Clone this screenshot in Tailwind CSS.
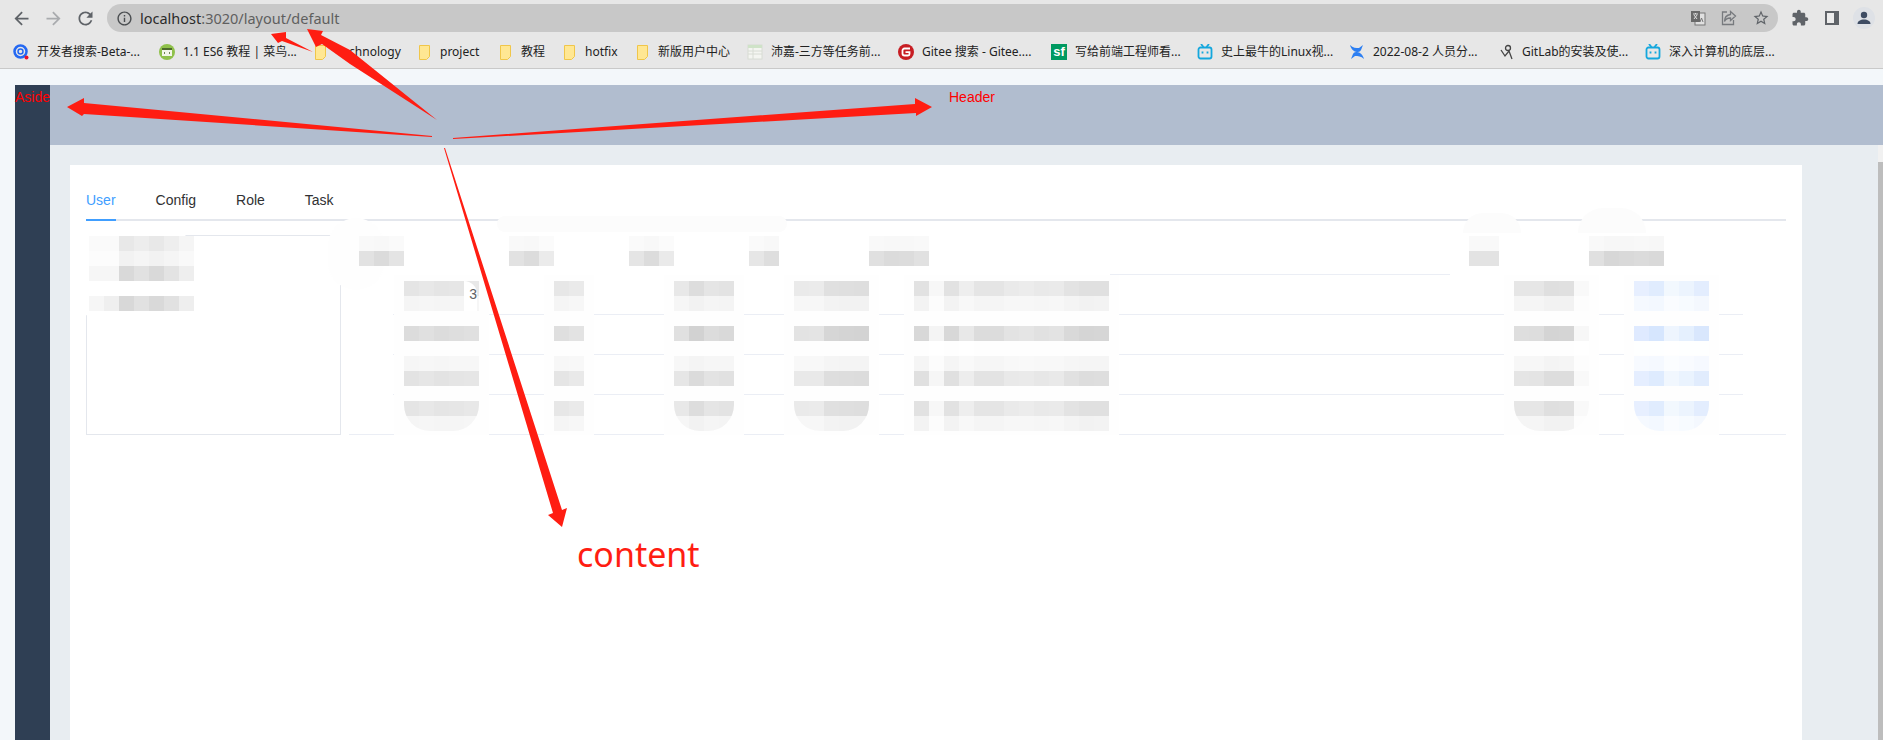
<!DOCTYPE html>
<html lang="en">
<head>
  <meta charset="UTF-8" />
  <title>localhost:3020/layout/default</title>
  <script src="https://cdn.jsdelivr.net/npm/@tailwindcss/browser@4"></script>
</head>
<body class="relative w-[1883px] h-[740px] overflow-hidden bg-[#f3f7fa] font-['Liberation_Sans',sans-serif]">

  <!-- Browser chrome -->
  <div class="h-[69px] bg-[#e7e7e7] border-b border-[#c9c9c9] font-['Noto_Sans','Noto_Sans_CJK_SC',sans-serif]">
    <div class="h-[36px] flex items-center">
      <div class="w-[107px] flex items-center pl-[11px] gap-[11px]">
        <svg class="w-[21px] h-[21px] fill-[#5f6368]" viewBox="0 0 24 24"><path d="M20 11H7.83l5.59-5.59L12 4l-8 8 8 8 1.41-1.41L7.83 13H20v-2z"/></svg>
        <svg class="w-[21px] h-[21px] fill-[#a9abae]" viewBox="0 0 24 24"><path d="M12 4l-1.41 1.41L16.17 11H4v2h12.17l-5.58 5.59L12 20l8-8z"/></svg>
        <svg class="w-[21px] h-[21px] fill-[#5f6368]" viewBox="0 0 24 24"><path d="M17.65 6.35C16.2 4.9 14.21 4 12 4c-4.42 0-7.99 3.58-7.99 8s3.57 8 7.99 8c3.73 0 6.84-2.55 7.73-6h-2.08c-.82 2.33-3.04 4-5.65 4-3.31 0-6-2.69-6-6s2.69-6 6-6c1.66 0 3.14.69 4.22 1.78L13 11h7V4l-2.35 2.35z"/></svg>
      </div>
      <div class="w-[1671px] h-[28px] rounded-full bg-[#c8c8c8] flex items-center pl-[9px] pr-[8px]">
        <svg class="w-[17px] h-[17px] fill-[#4a4d50]" viewBox="0 0 24 24"><path d="M11 7h2v2h-2zm0 4h2v6h-2zm1-9C6.48 2 2 6.48 2 12s4.48 10 10 10 10-4.48 10-10S17.52 2 12 2zm0 18c-4.41 0-8-3.59-8-8s3.59-8 8-8 8 3.59 8 8-3.59 8-8 8z"/></svg>
        <div class="ml-[7px] text-[14.5px] text-[#5f5f5f] leading-none"><span class="text-[#2b2b2b]">localhost</span>:3020/layout/default</div>
        <div class="ml-auto flex items-center gap-[14px]">
          <svg class="w-[16px] h-[16px]" viewBox="0 0 16 16"><rect x="5" y="3" width="10" height="12" fill="#e0e0e0" stroke="#777" /><rect x="1" y="1" width="9" height="11" fill="#6a6a6a" /><path d="M3 4h5M5.5 3v1M4 9l3-4M4 5l3 4" stroke="#ddd" fill="none"/><path d="M10 12l1.5-4 1.5 4" stroke="#777" fill="none"/></svg>
          <svg class="w-[18px] h-[18px] fill-none stroke-[#777a7e]" viewBox="0 0 18 18" stroke-width="1.3"><path d="M7 3H2.500v12.500h11V11"/><path d="M10.500 2.500l5 4.500-5 4.500V9c-3 0-5 1-6 3.500 0-4 2-6.500 6-7z"/></svg>
          <svg class="w-[18px] h-[18px] fill-[#5f6368]" viewBox="0 0 24 24"><path d="M22 9.24l-7.19-.62L12 2 9.19 8.63 2 9.24l5.46 4.73L5.82 21 12 17.27 18.18 21l-1.63-7.03L22 9.24zM12 15.4l-3.76 2.27 1-4.28-3.32-2.88 4.38-.38L12 6.1l1.71 4.04 4.38.38-3.32 2.88 1 4.28L12 15.4z"/></svg>
        </div>
      </div>
      <div class="flex items-center pl-[13px]">
        <svg class="w-[18px] h-[18px] fill-[#5f6368]" viewBox="0 0 24 24"><path d="M20.500 11H19V7c0-1.100-.9-2-2-2h-4V3.500C13 2.120 11.880 1 10.500 1S8 2.120 8 3.500V5H4c-1.100 0-1.990.9-1.990 2v3.800H3.500c1.490 0 2.700 1.210 2.700 2.700s-1.210 2.700-2.700 2.700H2V20c0 1.100.9 2 2 2h3.800v-1.500c0-1.490 1.210-2.700 2.700-2.700 1.490 0 2.700 1.210 2.700 2.700V22H17c1.100 0 2-.9 2-2v-4h1.500c1.380 0 2.500-1.120 2.500-2.500S21.880 11 20.500 11z"/></svg>
        <div class="ml-[16px] w-[14px] h-[14px] border-2 border-[#5f6368] bg-[#5f6368] flex"><div class="w-[7px] bg-[#ececec]"></div></div>
        <div class="ml-[14px] w-[22px] h-[22px] rounded-full bg-[#dee1e6] flex items-center justify-center">
          <svg class="w-[16px] h-[16px] fill-[#3e4c63]" viewBox="0 0 16 16"><circle cx="8" cy="5" r="3.200"/><path d="M1.500 14c0-3 3-4.500 6.500-4.500s6.500 1.500 6.500 4.500z"/></svg>
        </div>
      </div>
    </div>
    <div class="h-[32px] flex items-center pl-[13px] text-[12px] text-[#222]">
      <div class="w-[146px] flex items-center gap-[8px]">
        <svg class="w-[16px] h-[16px]" viewBox="0 0 16 16"><circle cx="7.500" cy="7.500" r="6" fill="none" stroke="#2468f2" stroke-width="2.500"/><circle cx="7.500" cy="7.500" r="2.500" fill="none" stroke="#2468f2" stroke-width="1.500"/><circle cx="13.500" cy="13.500" r="2" fill="#e8112d"/></svg>
        <span>开发者搜索-Beta-...</span>
      </div>
      <div class="w-[156px] flex items-center gap-[8px]">
        <svg class="w-[16px] h-[16px]" viewBox="0 0 16 16"><circle cx="8" cy="8" r="8" fill="#8fc14a"/><rect x="3" y="4" width="10" height="8" fill="#f2f6e8"/><rect x="3" y="4" width="10" height="2" fill="#4d6a2c"/><path d="M6 8l-1 1 1 1M10 8l1 1-1 1" stroke="#4d6a2c" fill="none" stroke-width=".8"/></svg>
        <span>1.1 ES6 教程 | 菜鸟...</span>
      </div>
      <div class="w-[104px] flex items-center gap-[12px]">
        <svg class="w-[11px] h-[15px] fill-[#ffe793] stroke-[#f0c64a]" viewBox="0 0 11 15"><path d="M.5.500h10v11l-3 3h-7z"/></svg>
        <span>technology</span>
      </div>
      <div class="w-[81px] flex items-center gap-[10px]">
        <svg class="w-[11px] h-[15px] fill-[#ffe793] stroke-[#f0c64a]" viewBox="0 0 11 15"><path d="M.5.500h10v11l-3 3h-7z"/></svg>
        <span>project</span>
      </div>
      <div class="w-[64px] flex items-center gap-[10px]">
        <svg class="w-[11px] h-[15px] fill-[#ffe793] stroke-[#f0c64a]" viewBox="0 0 11 15"><path d="M.5.500h10v11l-3 3h-7z"/></svg>
        <span>教程</span>
      </div>
      <div class="w-[73px] flex items-center gap-[10px]">
        <svg class="w-[11px] h-[15px] fill-[#ffe793] stroke-[#f0c64a]" viewBox="0 0 11 15"><path d="M.5.500h10v11l-3 3h-7z"/></svg>
        <span>hotfix</span>
      </div>
      <div class="w-[110px] flex items-center gap-[10px]">
        <svg class="w-[11px] h-[15px] fill-[#ffe793] stroke-[#f0c64a]" viewBox="0 0 11 15"><path d="M.5.500h10v11l-3 3h-7z"/></svg>
        <span>新版用户中心</span>
      </div>
      <div class="w-[151px] flex items-center gap-[8px]">
        <svg class="w-[16px] h-[16px]" viewBox="0 0 16 16"><rect x="1" y="1" width="14" height="14" fill="#f4f5f1" stroke="#d8dcd4"/><rect x="1" y="1" width="14" height="3" fill="#cfe3c8"/><path d="M1 7h14M1 10h14M6 4v11" stroke="#d8dcd4"/></svg>
        <span>沛嘉-三方等任务前...</span>
      </div>
      <div class="w-[153px] flex items-center gap-[8px]">
        <svg class="w-[16px] h-[16px]" viewBox="0 0 16 16"><circle cx="8" cy="8" r="8" fill="#c71d23"/><path d="M12 4.500H6.500a2 2 0 0 0-2 2v3a2 2 0 0 0 2 2H10a1.500 1.500 0 0 0 1.500-1.500V8.200H7.500" fill="none" stroke="#fff" stroke-width="1.800"/></svg>
        <span>Gitee 搜索 - Gitee....</span>
      </div>
      <div class="w-[146px] flex items-center gap-[8px]">
        <div class="w-[16px] h-[16px] bg-[#009a61] text-white text-[13px] font-bold leading-[16px] text-center font-['Liberation_Sans',sans-serif]">sf</div>
        <span>写给前端工程师看...</span>
      </div>
      <div class="w-[152px] flex items-center gap-[8px]">
        <svg class="w-[16px] h-[16px] fill-none stroke-[#14a7dd]" viewBox="0 0 16 16" stroke-width="1.800"><rect x="1.500" y="3.500" width="13" height="11" rx="2"/><path d="M4 0l2.500 3M12 0L9.500 3M5.500 7.500v2M10.500 7.500v2"/></svg>
        <span>史上最牛的Linux视...</span>
      </div>
      <div class="w-[148px] flex items-center gap-[8px]">
        <svg class="w-[16px] h-[16px] fill-[#2d7ff2]" viewBox="0 0 16 16"><path d="M1 1c3 3 6 3 9 3l4-3-2 5c-1 2-3 2-4 2-3 0-6-3-7-7zM15 15c-3-3-6-3-9-3l-4 3 2-5c1-2 3-2 4-2 3 0 6 3 7 7z"/></svg>
        <span>2022-08-2 人员分...</span>
      </div>
      <div class="w-[148px] flex items-center gap-[9px] pl-[3px]">
        <svg class="w-[13px] h-[16px] fill-none stroke-[#444]" viewBox="0 0 13 16" stroke-width="1.300"><circle cx="8" cy="4" r="2.500"/><path d="M1 6l4 6 4-5 3 8"/></svg>
        <span>GitLab的安装及使...</span>
      </div>
      <div class="flex items-center gap-[8px]">
        <svg class="w-[16px] h-[16px] fill-none stroke-[#14a7dd]" viewBox="0 0 16 16" stroke-width="1.800"><rect x="1.500" y="3.500" width="13" height="11" rx="2"/><path d="M4 0l2.500 3M12 0L9.500 3M5.500 7.500v2M10.500 7.500v2"/></svg>
        <span>深入计算机的底层...</span>
      </div>
    </div>
  </div>

  <!-- Page -->
  <div class="h-[671px] pl-[15px] pt-[16px] flex">
    <div class="w-[35px] h-full bg-[#2f3f54] text-[14px] text-[#ff0000] leading-[24px] whitespace-nowrap">Aside</div>
    <div class="flex-1 min-w-0 flex flex-col">
      <div class="h-[60px] bg-[#b1bdcf] pl-[899px] text-[14px] text-[#ff0000] leading-[24px]">Header</div>
      <div class="flex-1 bg-[#e8edf1] pt-[20px] pl-[20px] pr-[81px]">
        <div class="h-full bg-white px-[16px] pt-[16px]">
          <!-- Tabs -->
          <div class="h-[40px] flex gap-[40px] border-b-2 border-[#e4e7ed] text-[14px] text-[#303133] leading-[38px]">
            <div class="h-[40px] border-b-2 border-[#409eff] text-[#409eff]">User</div>
            <div>Config</div>
            <div>Role</div>
            <div>Task</div>
          </div>
          <div class="mt-[14px] flex gap-[8px]">
            <!-- Left tree -->
            <div class="w-[255px] h-[200px] border border-[#e4e7ed] pl-[2px]">
              <div id="tree" class="relative z-20"></div>
            </div>
            <!-- Table -->
            <div id="table" class="flex-1 min-w-0"></div>
          </div>
        </div>
      </div>
    </div>
  </div>

  <!-- Smudges left by the blur over the card -->
  <div class="absolute z-10 left-[70px] top-[225px] w-[126px] h-[96px] bg-white rounded-[36px]"></div>
  <div class="absolute z-10 left-[328px] top-[218px] w-[56px] h-[72px] bg-[#fefefe] rounded-[28px]"></div>
  <div class="absolute z-10 left-[497px] top-[216px] w-[290px] h-[16px] bg-[#fcfcfc] rounded-full"></div>
  <div class="absolute z-10 left-[1463px] top-[213px] w-[58px] h-[20px] bg-[#fcfcfc] rounded-t-full"></div>
  <div class="absolute z-10 left-[1578px] top-[208px] w-[68px] h-[25px] bg-[#fcfcfc] rounded-t-full"></div>

  <!-- Half hidden value in the first row -->
  <div class="absolute z-20 left-[464px] top-[281px] w-[13px] h-[30px] bg-white rounded-tr-[14px] text-right text-[14px] leading-[26px] text-[#606266]">3</div>

  <!-- Scrollbar -->
  <div class="absolute right-0 top-[145px] w-[5px] h-[17px] bg-[#f1f1f1]"></div>
  <div class="absolute right-0 top-[162px] w-[5px] h-[578px] bg-[#bdbdbd]"></div>

  <!-- Annotations -->
  <svg class="absolute z-30 left-0 top-0 w-[1883px] h-[740px] fill-[#ff1d12]" viewBox="0 0 1883 740">
    <polygon points="432,136 84,103 84,98 67,107 82,116 84,114 432,137" />
    <polygon points="453,138 915,104 915,98 932,107 916,116 916,113 453,139" />
    <polygon points="313,52 286,38 286,32 271,34 278,43 282,41" />
    <polygon points="437,120 350,50 321,35 323,31 307,29 316,47 322,44 350,64" />
    <polygon points="445,148 562,510 567,508 562,527 548,515 553,513 444,148" />
  </svg>
  <div class="absolute z-30 left-[577px] top-[530px] text-[34px] leading-[48px] text-[#ff1d12] font-['Noto_Sans',sans-serif]">content</div>

  <script>
    // Mosaic blocks: each cell is 255 minus delta * level, so a column keeps its shade across lines
    function tint(delta, level) {
      const d = Array.isArray(delta) ? delta : [delta, delta, delta];
      return 'rgb(' + d.map(v => Math.round(255 - v * level)).join(',') + ')';
    }

    function mosaic(deltas, levels) {
      return levels.map(level => {
        const cells = deltas.map(d =>
          `<div class="w-[15px] h-[15px]" style="background:${tint(d, level)}"></div>`).join('');
        return `<div class="flex">${cells}</div>`;
      }).join('');
    }

    const blue = [[32, 21, 0], [41, 25, 1], [17, 10, 1], [26, 15, 1], [38, 24, 2]];

    const columns = [
      { width: 'w-[150px]', head: [29, 36, 27], body: [35, 31, 35, 33, 31], round: true },
      { width: 'w-[120px]', head: [29, 35, 20], body: [32, 28], round: false },
      { width: 'w-[120px]', head: [26, 35, 21], body: [31, 45, 35, 38], round: true },
      { width: 'w-[120px]', head: [25, 33], body: [28, 27, 41, 43, 44], round: true },
      { width: 'w-[600px]', head: [31, 36, 35, 30], body: [39, 11, 39, 23, 35, 35, 28, 26, 30, 28, 38, 42, 41], round: false },
      { width: 'w-[120px]', head: [28, 28], body: [33, 34, 43, 42, 8], round: true },
      { width: 'flex-1', head: [31, 40, 38, 36, 38], body: blue, round: true },
    ];

    const rows = [
      { pad: 'pt-[6px]', levels: [0.75, 0.3], line: 'left-[44px] right-[43px]' },
      { pad: 'pt-[11px]', levels: [1, 0.02], line: 'left-[44px] right-[43px]' },
      { pad: 'pt-[1px]', levels: [0.25, 0.8], line: 'left-[44px] right-[43px]' },
      { pad: 'pt-[6px]', levels: [0.75, 0.3], line: 'left-0 right-0' },
    ];

    const headCells = columns.map(c =>
      `<div class="${c.width} pl-[10px] pt-[1px]"><div class="relative z-20">${mosaic(c.head, [0.2, 1])}</div></div>`).join('');

    const bodyRows = rows.map((r, i) => {
      const cells = columns.map(c => {
        const edge = i === 3 && c.round ? 'rounded-b-[26px] overflow-hidden' : '';
        return `<div class="${c.width} pl-[45px] relative">
          <div class="w-fit h-[40px] bg-[#fefefe] px-[10px] ${r.pad}">
            <div class="${edge}">${mosaic(c.body, r.levels)}</div>
          </div>
        </div>`;
      }).join('');
      return `<div class="h-[40px] relative flex">
        <div class="absolute bottom-0 ${r.line} border-b border-[#ebeef5]"></div>
        ${cells}
      </div>`;
    }).join('');

    document.getElementById('table').innerHTML =
      `<div class="h-[40px] flex relative">${headCells}
         <div class="absolute left-[761px] w-[340px] bottom-0 border-b border-[#ebeef5]"></div>
       </div>` + bodyRows;

    document.getElementById('tree').innerHTML =
      mosaic([9, 9, 38, 30, 38, 28, 17], [0.6, 0.35, 1]) +
      '<div class="h-[15px]"></div>' +
      mosaic([9, 16, 39, 30, 38, 30, 17], [1]);
  </script>
</body>
</html>
